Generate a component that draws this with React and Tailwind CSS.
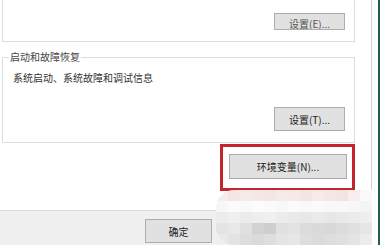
import React from "react";

const mosaic = [
  ["#f6eeee", "#f4e6e6", "#f6eaea", "#f5e8e8", "#f4e6e6", "#f6ebeb", "#f5e9e9", "#f4e4e4", "#f6eaea", "#f5e7e7", "#f3e3e3", "#f7eeee", "#fafafa"],
  ["#f7f7f7", "#fbfbfb", "#f9f9f9", "#fcfcfc", "#fafafa", "#f8f8f8", "#fbfbfb", "#f9f9f9", "#fafafa", "#f8f8f8", "#f9f9f9", "#f7f7f7", "#f4f4f4"],
  ["#ececec", "#efefef", "#ebebeb", "#eeeeee", "#f0f0f0", "#ececec", "#e9e9e9", "#e8e8e8", "#eaeaea", "#e7e7e7", "#e9e9e9", "#ebebeb", "#eeeeee"],
  ["#e4e4e4", "#e8e8e8", "#e0e0e0", "#d2d2d2", "#cfcfcf", "#e0e0e0", "#e3e3e3", "#dcdcdc", "#dadada", "#d8d8d8", "#dcdcdc", "#e0e0e0", "#e6e6e6"],
  ["#e9e9e9", "#e3e3e3", "#dddddd", "#dadada", "#dedede", "#e4e4e4", "#e6e6e6", "#dedede", "#dbdbdb", "#dddddd", "#e0e0e0", "#e4e4e4", "#ececec"],
];

function Btn({ children, className = "" }) {
  return (
    <div
      className={
        "flex items-center justify-center border border-[#adadad] bg-[#e1e1e1] text-[10px] text-[#222] " +
        className
      }
    >
      {children}
    </div>
  );
}

export default function App() {
  return (
    <div
      className="relative flex h-[245px] w-[381px] overflow-hidden bg-white"
      style={{ fontFamily: '"Noto Sans CJK SC", "Noto Sans", sans-serif' }}
    >
      {/* dialog body */}
      <div className="flex w-[372px] flex-col border-r border-[#d4d4d4]">
        {/* top group box (cut off) */}
        <div className="ml-[2px] flex h-[42px] w-[353px] justify-end border-x border-b border-[#dcdcdc] pt-[13px] pr-[9px]">
          <Btn className="h-[17px] w-[71px] overflow-hidden text-[#555]">
            <span className="translate-y-[2px] leading-[12px]">设置(E)...</span>
          </Btn>
        </div>

        {/* startup and recovery */}
        <div className="relative ml-[2px] mt-[15px] flex h-[86px] w-[353px] flex-col border border-[#dcdcdc]">
          <span className="absolute -top-[8px] left-[6px] bg-white px-[1px] text-[10px] leading-[14px] text-[#444]">
            启动和故障恢复
          </span>
          <span className="ml-[10px] mt-[13px] text-[10px] leading-[14px] text-[#333]">
            系统启动、系统故障和调试信息
          </span>
          <div className="mt-auto mb-[11px] mr-[9px] flex justify-end">
            <Btn className="h-[24px] w-[71px]">设置(T)...</Btn>
          </div>
        </div>

        {/* highlighted env button */}
        <div className="ml-[220px] mt-px h-[47px] w-[135px] border-[3px] border-[#c3262d] pl-[6px] pt-[7px]">
          <Btn className="h-[25px] w-[118px]">环境变量(N)...</Btn>
        </div>

        <div className="flex-1" />

        {/* bottom bar */}
        <div className="flex h-[35px] border-t border-[#dadada] bg-[#f0f0f0] pl-[145px] pt-[8px]">
          <Btn className="h-[24px] w-[67px]">确定</Btn>
        </div>
      </div>

      {/* window edge */}
      <div className="ml-[6px] w-[2px] bg-[#1f5e52]" />

      {/* mosaic blur overlay */}
      <div className="absolute left-[216px] top-[190px] grid grid-cols-[repeat(13,12px)] grid-rows-[repeat(5,11px)] overflow-hidden rounded-l-[18px]">
        {mosaic.flat().map((c, i) => (
          <div key={i} style={{ backgroundColor: c }} />
        ))}
      </div>
    </div>
  );
}
